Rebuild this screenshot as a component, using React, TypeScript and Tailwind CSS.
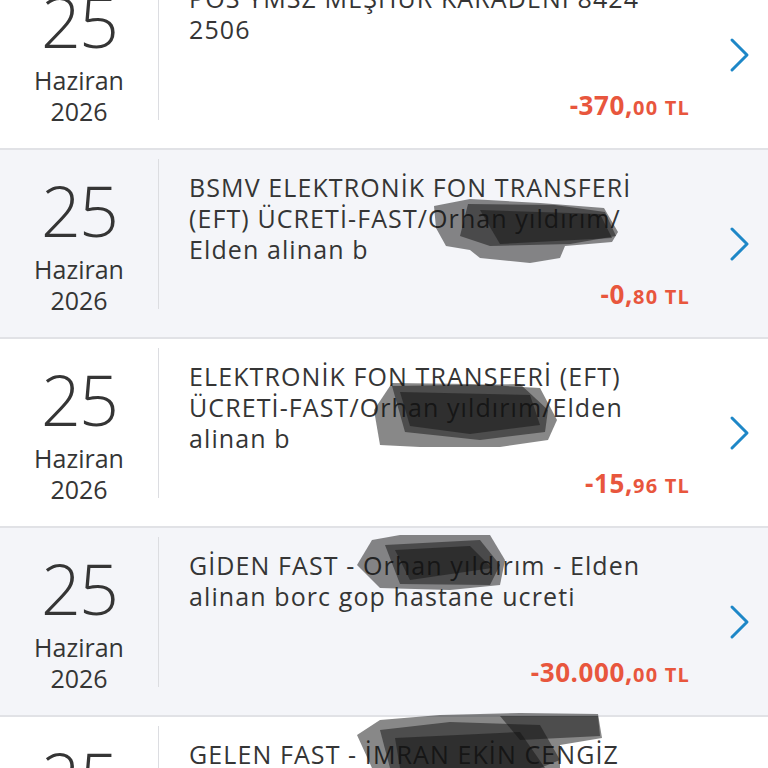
import React from "react";

type Row = {
  lines: string[];
  whole: string;
  dec: string;
  bg: string;
};

const rows: Row[] = [
  { lines: ["POS YMSZ MEŞHUR KARADENİ 8424", "2506"], whole: "-370,", dec: "00", bg: "bg-white" },
  {
    lines: ["BSMV ELEKTRONİK FON TRANSFERİ", "(EFT) ÜCRETİ-FAST/Orhan yıldırım/", "Elden alinan b"],
    whole: "-0,",
    dec: "80",
    bg: "bg-[#f4f5f9]",
  },
  {
    lines: ["ELEKTRONİK FON TRANSFERİ (EFT)", "ÜCRETİ-FAST/Orhan yıldırım/Elden", "alinan b"],
    whole: "-15,",
    dec: "96",
    bg: "bg-white",
  },
  {
    lines: ["GİDEN FAST - Orhan yıldırım - Elden", "alinan borc gop hastane ucreti"],
    whole: "-30.000,",
    dec: "00",
    bg: "bg-[#f4f5f9]",
  },
  { lines: ["GELEN FAST - İMRAN EKİN CENGİZ"], whole: "-1.000,", dec: "00", bg: "bg-white" },
];

function Chevron() {
  return (
    <svg width="22" height="36" viewBox="0 0 22 36" fill="none">
      <polyline
        points="3,3 18,18 3,33"
        stroke="#1e87c7"
        strokeWidth="3"
        strokeLinecap="round"
        strokeLinejoin="round"
      />
    </svg>
  );
}

function TxRow({ r }: { r: Row }) {
  return (
    <div className={`flex h-[189px] border-b-2 border-[#e1e2e6] ${r.bg}`}>
      <div className="w-[158px] flex flex-col items-center pt-[29px] text-[#353535]">
        <div className="text-[70px] leading-[62px] font-light tracking-[-2px]">25</div>
        <div className="mt-[13px] text-[25px] leading-[31px]">Haziran</div>
        <div className="text-[25px] leading-[31px]">2026</div>
      </div>
      <div className="flex items-center">
        <div className="w-px h-[150px] bg-[#dcdde1] -mt-[20px]" />
      </div>
      <div className="w-[531px] pl-[30px] pt-[22px] pb-[23px] flex flex-col justify-between">
        <div className="text-[25px] leading-[31px] tracking-[1.1px] text-[#353535] whitespace-nowrap">
          {r.lines.map((l, i) => (
            <div key={i}>{l}</div>
          ))}
        </div>
        <div className="self-end leading-[31px] font-bold text-[#e8563d]">
          <span className="text-[26px] tracking-[0.6px]">{r.whole}</span>
          <span className="text-[20px] tracking-[1.2px]">{r.dec} TL</span>
        </div>
      </div>
      <div className="flex-1 flex items-center pl-[39px]">
        <Chevron />
      </div>
    </div>
  );
}

export default function App() {
  return (
    <div
      className="relative w-[768px] h-[768px] overflow-hidden bg-white"
      style={{ fontFamily: '"Open Sans", "Noto Sans", sans-serif' }}
    >
      <div className="-mt-[39px]">
        {rows.map((r, i) => (
          <TxRow key={i} r={r} />
        ))}
      </div>
      <svg
        className="absolute inset-0 pointer-events-none"
        width="768"
        height="768"
        viewBox="0 0 768 768"
      >
        <g fill="#111" fillOpacity="0.5">
          {/* row 2 */}
          <polygon points="434,206 470,199 540,203 604,208 618,232 612,242 565,246 560,258 530,263 480,258 470,250 446,246 436,228" />
          <polygon points="468,204 555,205 605,212 616,236 570,244 490,246 460,236" />
          <polygon points="480,210 600,214 612,238 500,244" />
          {/* row 3 */}
          <polygon points="374,410 392,383 470,384 540,388 557,420 548,440 500,447 420,447 380,445" />
          <polygon points="392,386 520,384 548,410 545,432 480,440 405,432" />
          <polygon points="400,392 530,395 540,425 470,434 410,426" />
          {/* row 4 */}
          <polygon points="357,565 372,540 400,535 490,535 505,560 500,585 450,590 380,588" />
          <polygon points="385,545 480,540 500,565 490,585 400,584" />
          <polygon points="395,550 470,546 492,568 410,580" />
          {/* row 5 */}
          <polygon points="357,735 380,720 440,715 520,713 598,714 602,738 560,745 560,768 372,768" />
          <polygon points="380,730 450,722 540,725 560,760 540,768 390,768" />
          <polygon points="500,716 598,716 600,736 520,740" />
          <polygon points="395,738 520,732 545,768 400,768" />
        </g>
      </svg>
    </div>
  );
}
